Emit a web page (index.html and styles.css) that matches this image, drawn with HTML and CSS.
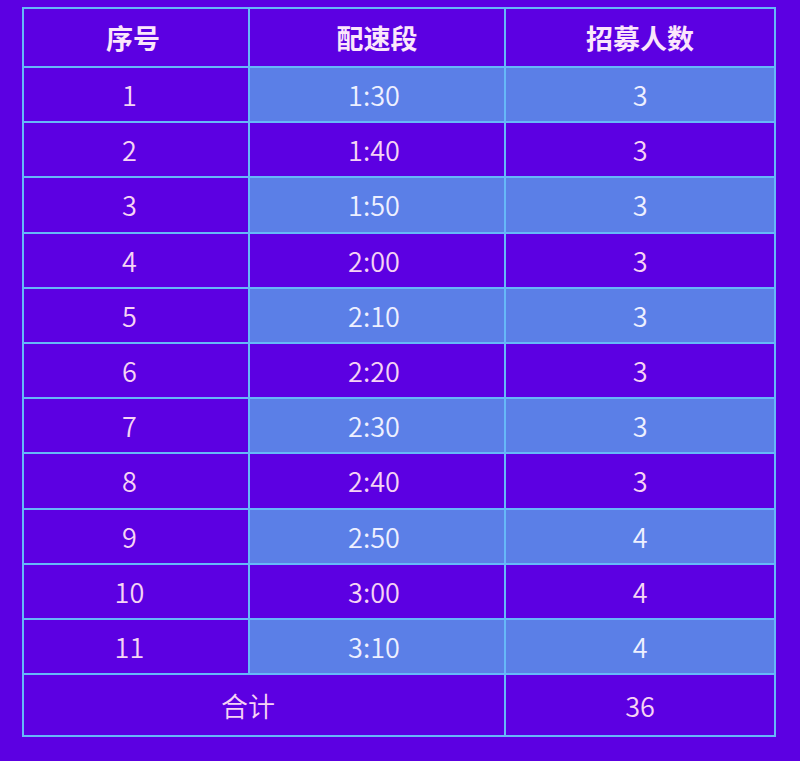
FILE: index.html
```html
<!DOCTYPE html>
<html lang="zh">
<head>
<meta charset="utf-8">
<link rel="stylesheet" href="styles.css">
</head>
<body>
<table class="pace-table">
  <thead>
    <tr class="head-row"><th class="c1">序号</th><th class="c2">配速段</th><th class="c3">招募人数</th></tr>
  </thead>
  <tbody>
    <tr class="odd"><td>1</td><td>1:30</td><td>3</td></tr>
    <tr class="even"><td>2</td><td>1:40</td><td>3</td></tr>
    <tr class="odd"><td>3</td><td>1:50</td><td>3</td></tr>
    <tr class="even"><td>4</td><td>2:00</td><td>3</td></tr>
    <tr class="odd"><td>5</td><td>2:10</td><td>3</td></tr>
    <tr class="even"><td>6</td><td>2:20</td><td>3</td></tr>
    <tr class="odd"><td>7</td><td>2:30</td><td>3</td></tr>
    <tr class="even"><td>8</td><td>2:40</td><td>3</td></tr>
    <tr class="odd"><td>9</td><td>2:50</td><td>4</td></tr>
    <tr class="even"><td>10</td><td>3:00</td><td>4</td></tr>
    <tr class="odd"><td>11</td><td>3:10</td><td>4</td></tr>
    <tr class="total-row"><td colspan="2" class="total-label">合计</td><td>36</td></tr>
  </tbody>
</table>
</body>
</html>
```

FILE: styles.css
```css
html, body {
  margin: 0;
  padding: 0;
  background: #5c00e2;
}
body {
  padding: 7px 24px 0 22px;
  font-family: "Noto Sans CJK SC", "Noto Sans", sans-serif;
  color: #f6d4f4;
}
.pace-table {
  width: 754px;
  border-collapse: collapse;
  border: 2px solid #66b8f8;
  table-layout: fixed;
}
.pace-table th,
.pace-table td {
  border: 2px solid #66b8f8;
  text-align: center;
  padding: 0;
}
.c1 { width: 30%; }
.c2 { width: 34.1%; }
.c3 { width: 35.9%; }
.head-row th {
  height: 57px;
  font-size: 27px;
  font-weight: 700;
  color: #fbe6fb;
}
.head-row .c1 {
  text-indent: -6px;
}
tbody td {
  height: 53.2px;
  font-size: 27px;
  font-weight: 350;
}
.odd td:first-child,
.even td:first-child {
  text-indent: -13px;
}
.odd td:nth-child(2),
.even td:nth-child(2) {
  text-indent: -6px;
}
.odd td + td {
  background: #5b7fe7;
  color: #eef0ff;
}
.total-row td {
  height: 60px;
}
.total-row .total-label {
  text-indent: -32px;
}
```
